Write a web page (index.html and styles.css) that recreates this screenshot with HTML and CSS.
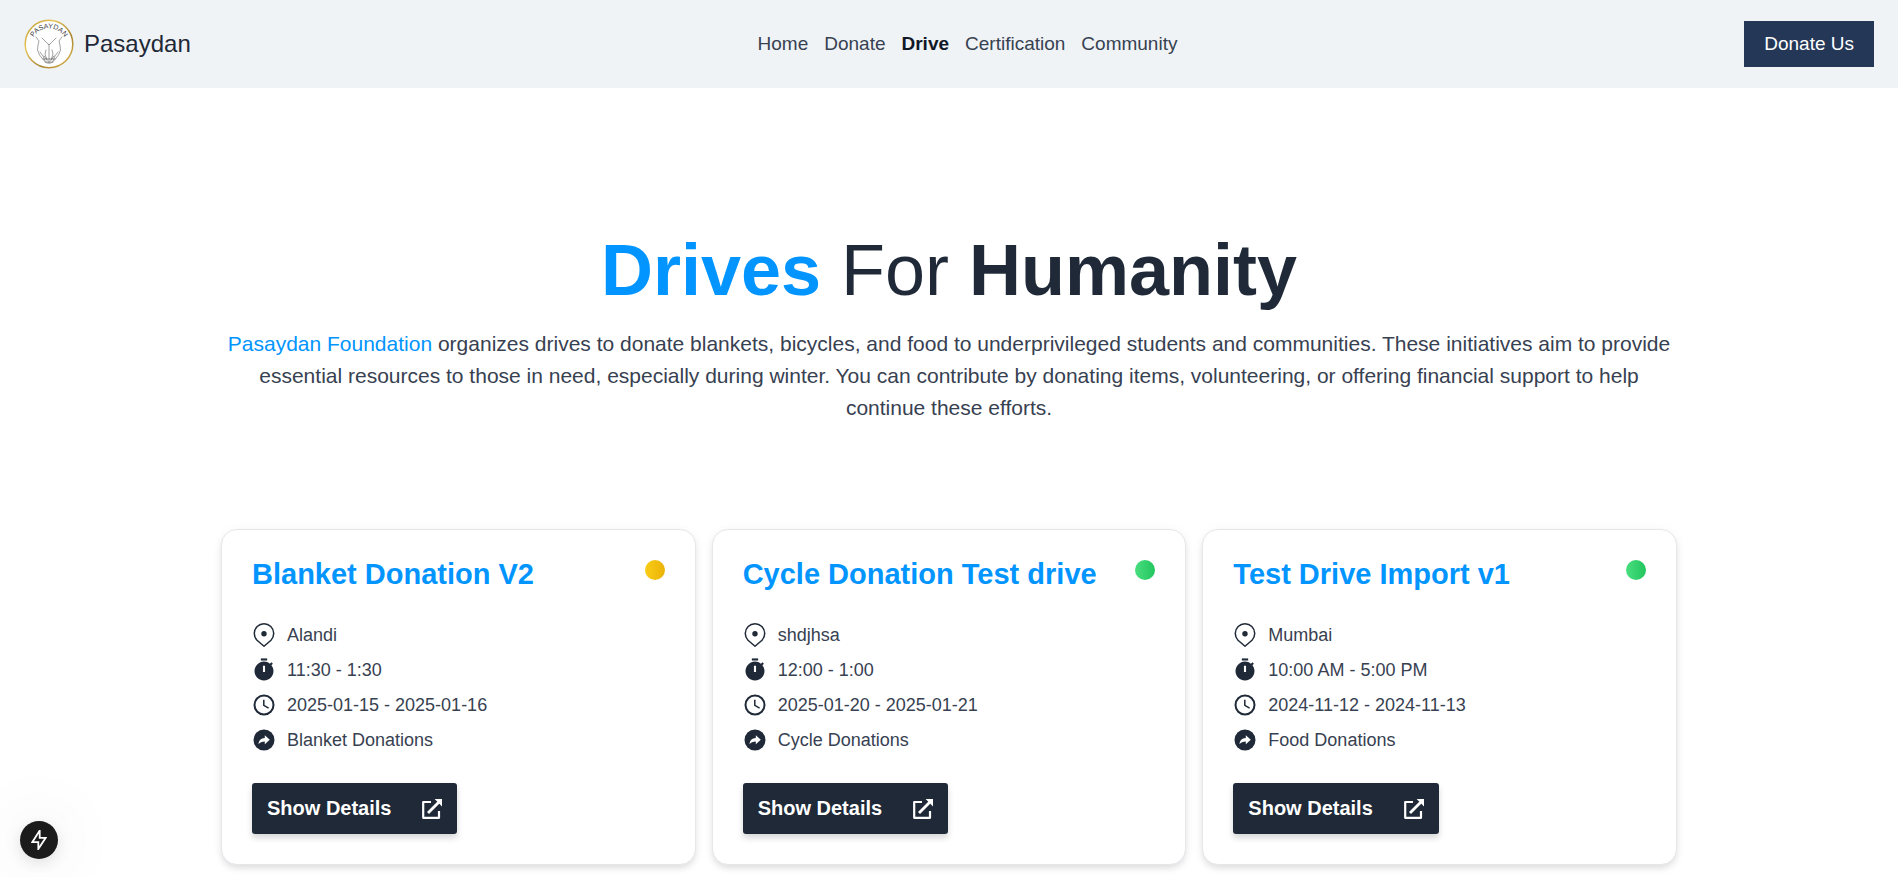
FILE: index.html
```html
<!DOCTYPE html>
<html lang="en">
<head>
<meta charset="utf-8">
<meta name="viewport" content="width=device-width, initial-scale=1">
<title>Pasaydan</title>
<link rel="stylesheet" href="styles.css">
</head>
<body>
<svg class="sprite" aria-hidden="true">
  <symbol id="pin" viewBox="0 0 24 24">
    <path d="M12 23.2 5 17.2A9.7 9.7 0 1 1 19 17.2Z" fill="none" stroke="currentColor" stroke-width="1.5" stroke-linejoin="round"/>
    <circle cx="12" cy="10.8" r="2.7"/>
  </symbol>
  <symbol id="timer" viewBox="0.6 0.6 22.8 22.8">
    <path d="M9 1h6v2H9z"/>
    <path fill-rule="evenodd" d="M19.03 7.39l1.42-1.42c-.45-.51-.9-.97-1.41-1.41L17.62 6c-1.55-1.26-3.5-2-5.62-2a9 9 0 1 0 7.03 3.39zM13 14h-2V8h2v6z"/>
  </symbol>
  <symbol id="clock" viewBox="0 0 24 24">
    <circle cx="12" cy="12" r="9.5" fill="none" stroke="currentColor" stroke-width="2"/>
    <path d="M11.8 6.8v5.5l4.8 2.8" fill="none" stroke="currentColor" stroke-width="1.5"/>
  </symbol>
  <symbol id="share" viewBox="0 0 24 24">
    <circle cx="12" cy="12" r="10.5"/>
    <path d="M6.5 16.2c.3-3.9 2.5-6.2 6.3-6.3V7.2l5 4.6-5 4.5v-2.8c-2.8 0-4.8.8-6.3 2.7z" fill="#fff"/>
  </symbol>
  <symbol id="external" viewBox="0 0 20 20">
    <path d="M9 3H1.2v15.8H17V12" fill="none" stroke="currentColor" stroke-width="2.2" stroke-linejoin="round"/>
    <path d="M6 14 17 3" fill="none" stroke="currentColor" stroke-width="2.8"/>
    <path d="M12.6 0H20v7.4l-2.6-2.6-2.3-2.3z"/>
  </symbol>
</svg>

<header class="header">
  <a class="brand" href="#">
    <svg class="logo" viewBox="0 0 50 50" role="img" aria-label="Pasaydan logo">
      <defs>
        <linearGradient id="gold" x1="0" y1="0" x2="1" y2="1">
          <stop offset="0" stop-color="#b8922e"/><stop offset=".3" stop-color="#e8c65a"/><stop offset=".65" stop-color="#a88432"/><stop offset="1" stop-color="#e3bc48"/>
        </linearGradient>
        <path id="arc" d="M8.5 21A17.5 17.5 0 0 1 41.5 21"/>
      </defs>
      <circle cx="25" cy="25" r="23.8" fill="#fff" stroke="url(#gold)" stroke-width="1.5"/>
      <text class="logo-text"><textPath href="#arc" startOffset="50%" text-anchor="middle">PASAYDAN</textPath></text>
      <g fill="none" stroke="#8b8b8b" stroke-width=".8" stroke-linecap="round">
        <path d="M12 18l3 4-1 4-.5 5 2 5 4 5 3 3h5l3-3 4-5 2-5-.5-5-1-4 3-4"/>
        <path d="M18 19l7 7 7-7M25 25v19M22 31l-1 4 2 6M28 31l1 4-2 6M16 33l3 4 2 5M34 33l-3 4-2 5"/>
        <path d="M20 37l3 4M30 37l-3 4M19 40h12M21 43h8" stroke="#666" stroke-width=".7"/>
      </g>
    </svg>
    <span>Pasaydan</span>
  </a>
  <nav class="nav" aria-label="Main">
    <a href="#">Home</a>
    <a href="#">Donate</a>
    <a class="active" href="#" aria-current="page">Drive</a>
    <a href="#">Certification</a>
    <a href="#">Community</a>
  </nav>
  <button class="donate" type="button">Donate Us</button>
</header>

<main class="main">
  <section class="hero">
    <h1><strong class="accent">Drives</strong> For <strong>Humanity</strong></h1>
    <p><span class="accent">Pasaydan Foundation</span> organizes drives to donate blankets, bicycles, and food to underprivileged students and communities. These initiatives aim to provide essential resources to those in need, especially during winter. You can contribute by donating items, volunteering, or offering financial support to help continue these efforts.</p>
  </section>

  <section class="cards" aria-label="Drives">
    <article class="card">
      <div class="card-head"><h2>Blanket Donation V2</h2><span class="dot dot-pending"></span></div>
      <ul class="facts">
        <li><svg><use href="#pin"/></svg>Alandi</li>
        <li><svg><use href="#timer"/></svg>11:30 - 1:30</li>
        <li><svg><use href="#clock"/></svg>2025-01-15 - 2025-01-16</li>
        <li><svg><use href="#share"/></svg>Blanket Donations</li>
      </ul>
      <button class="details" type="button">Show Details<svg><use href="#external"/></svg></button>
    </article>
    <article class="card">
      <div class="card-head"><h2>Cycle Donation Test drive</h2><span class="dot dot-active"></span></div>
      <ul class="facts">
        <li><svg><use href="#pin"/></svg>shdjhsa</li>
        <li><svg><use href="#timer"/></svg>12:00 - 1:00</li>
        <li><svg><use href="#clock"/></svg>2025-01-20 - 2025-01-21</li>
        <li><svg><use href="#share"/></svg>Cycle Donations</li>
      </ul>
      <button class="details" type="button">Show Details<svg><use href="#external"/></svg></button>
    </article>
    <article class="card">
      <div class="card-head"><h2>Test Drive Import v1</h2><span class="dot dot-active"></span></div>
      <ul class="facts">
        <li><svg><use href="#pin"/></svg>Mumbai</li>
        <li><svg><use href="#timer"/></svg>10:00 AM - 5:00 PM</li>
        <li><svg><use href="#clock"/></svg>2024-11-12 - 2024-11-13</li>
        <li><svg><use href="#share"/></svg>Food Donations</li>
      </ul>
      <button class="details" type="button">Show Details<svg><use href="#external"/></svg></button>
    </article>
  </section>
</main>

<button class="fab" type="button" aria-label="Quick actions">
  <svg viewBox="0 0 16 20"><path d="M8.4 1 1.3 12.2h6V19L14.7 7.8h-6V1Z" fill="none" stroke="currentColor" stroke-width="1.8"/></svg>
</button>
</body>
</html>
```

FILE: styles.css
```css
* { box-sizing: border-box; }

body {
  margin: 0;
  background: #fff;
  color: #374151;
  font-family: "Liberation Sans", Arial, sans-serif;
}

button { border: 0; font-family: inherit; cursor: pointer; }
a { color: inherit; text-decoration: none; }
h1, h2, p, ul { margin: 0; padding: 0; }

.sprite { position: absolute; width: 0; height: 0; }
.accent { color: #0295ff; }

.header {
  display: flex;
  align-items: center;
  justify-content: space-between;
  min-height: 88px;
  padding: 0 24px;
  background: #eff3f6;
}

.brand {
  display: flex;
  align-items: center;
  gap: 10px;
  color: #1f2937;
  font-size: 24px;
}
.logo { width: 50px; height: 50px; }
.logo-text {
  fill: #444;
  font-family: "Liberation Sans Narrow", "Liberation Sans", sans-serif;
  font-size: 7px;
}

.nav { display: flex; gap: 16px; font-size: 19px; }
.active { color: #111827; font-weight: 700; }

.donate {
  padding: 0 20px;
  background: #243757;
  color: #fff;
  font-size: 19px;
  line-height: 46px;
}

.main { max-width: 1536px; margin: 0 auto; padding: 144px 40px 12px; }

.hero { text-align: center; }
.hero h1 { color: #1f2937; font-size: 72px; font-weight: 400; line-height: 76px; }
.hero p { margin-top: 20px; font-size: 21px; line-height: 32px; }

.cards {
  display: grid;
  grid-template-columns: repeat(3, 1fr);
  gap: 16px;
  margin-top: 105px;
}
.card {
  padding: 24px 30px 30px;
  border: 1px solid #e5e7eb;
  border-radius: 16px;
  background: #fff;
  box-shadow: 0 4px 6px -1px rgba(0, 0, 0, .1), 0 2px 12px rgba(0, 0, 0, .05);
}
.card-head { display: flex; justify-content: space-between; padding-bottom: 29px; }
.card h2 { color: #0295ff; font-size: 29px; line-height: 40px; }
.dot { width: 20px; height: 20px; margin-top: 6px; border-radius: 50%; }
.dot-pending { background: linear-gradient(90deg, #facc15, #eab308); }
.dot-active { background: linear-gradient(90deg, #4ade80, #22c55e); }

.facts { display: grid; gap: 11px; list-style: none; font-size: 18px; line-height: 24px; }
.facts li { display: flex; align-items: center; gap: 11px; }
.facts svg { width: 24px; height: 24px; color: #1f2937; fill: currentColor; }

.details {
  display: flex;
  align-items: center;
  gap: 31px;
  margin-top: 31px;
  padding: 0 15px;
  border-radius: 3px;
  background: #1f2937;
  color: #fff;
  font-size: 20px;
  font-weight: 700;
  line-height: 51px;
  box-shadow: 0 4px 6px rgba(0, 0, 0, .16);
}
.details svg { width: 20px; height: 20px; fill: currentColor; }

.fab {
  position: fixed;
  bottom: 18px;
  left: 20px;
  display: grid;
  place-items: center;
  width: 38px;
  height: 38px;
  padding: 0;
  border-radius: 50%;
  background: #1b1b1c;
  color: #fff;
  box-shadow: 0 4px 16px rgba(0, 0, 0, .12), 0 0 70px rgba(0, 0, 0, .12);
}
.fab svg { width: 16px; height: 20px; }
```
